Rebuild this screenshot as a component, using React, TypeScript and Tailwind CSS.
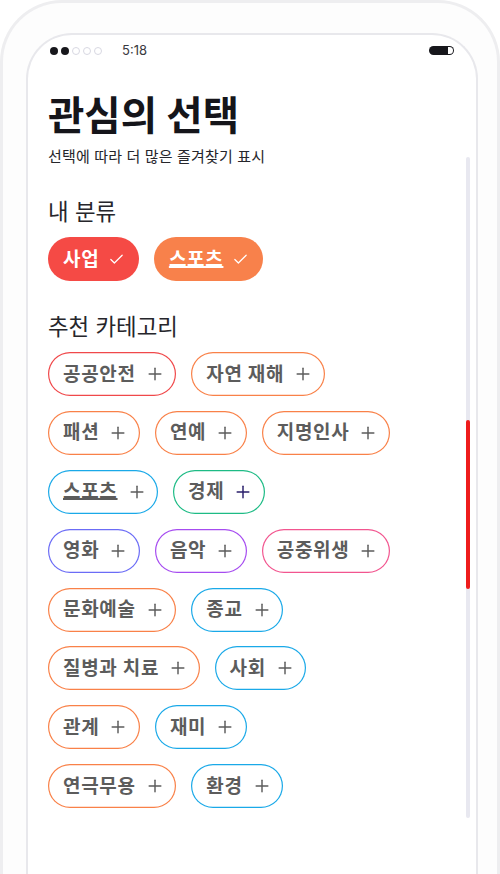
import { Plus, Check } from "lucide-react";

type Topic = { label: string; border: string; plusColor?: string; underline?: boolean };

const rows: Topic[][] = [
    [
        { label: "공공안전", border: "shadow-[inset_0_0_0_1.2px_#f0484a]" },
        { label: "자연 재해", border: "shadow-[inset_0_0_0_1.2px_#f98148]" },
    ],
    [
        { label: "패션", border: "shadow-[inset_0_0_0_1.2px_#f98148]" },
        { label: "연예", border: "shadow-[inset_0_0_0_1.2px_#f98148]" },
        { label: "지명인사", border: "shadow-[inset_0_0_0_1.2px_#f98148]" },
    ],
    [
        { label: "스포츠", border: "shadow-[inset_0_0_0_1.2px_#1aa9e8]", underline: true },
        { label: "경제", border: "shadow-[inset_0_0_0_1.2px_#1dbb85]", plusColor: "text-[#2a1f6b]" },
    ],
    [
        { label: "영화", border: "shadow-[inset_0_0_0_1.2px_#6b6cf6]" },
        { label: "음악", border: "shadow-[inset_0_0_0_1.2px_#a64cf0]" },
        { label: "공중위생", border: "shadow-[inset_0_0_0_1.2px_#f2558f]" },
    ],
    [
        { label: "문화예술", border: "shadow-[inset_0_0_0_1.2px_#f98148]" },
        { label: "종교", border: "shadow-[inset_0_0_0_1.2px_#1aa9e8]" },
    ],
    [
        { label: "질병과 치료", border: "shadow-[inset_0_0_0_1.2px_#f98148]" },
        { label: "사회", border: "shadow-[inset_0_0_0_1.2px_#1aa9e8]" },
    ],
    [
        { label: "관계", border: "shadow-[inset_0_0_0_1.2px_#f98148]" },
        { label: "재미", border: "shadow-[inset_0_0_0_1.2px_#1aa9e8]" },
    ],
    [
        { label: "연극무용", border: "shadow-[inset_0_0_0_1.2px_#f98148]" },
        { label: "환경", border: "shadow-[inset_0_0_0_1.2px_#1aa9e8]" },
    ],
];

const TopicChip = ({ topic }: { topic: Topic }) => (
    <div className={`flex h-[44px] items-center gap-[9px] rounded-full bg-white pl-[15px] pr-[11.5px] ${topic.border}`}>
        <span className={`text-[19px] leading-none font-bold tracking-[0.7px] text-[#5c5c5c] ${topic.underline ? "underline decoration-[1.5px] underline-offset-0" : ""}`}>
            {topic.label}
        </span>
        <Plus size={20} strokeWidth={1.75} className={topic.plusColor ?? "text-[#5c5c5c]"} />
    </div>
);

const SelectedChip = ({ label, bg, underline }: { label: string; bg: string; underline?: boolean }) => (
    <div className={`flex h-[44px] items-center gap-[9px] rounded-full pl-[15px] pr-[13.5px] ${bg}`}>
        <span className={`text-[19px] leading-none font-bold tracking-[0.7px] text-white ${underline ? "underline decoration-[1.5px] underline-offset-0" : ""}`}>{label}</span>
        <Check size={17} strokeWidth={1.75} className="text-white" />
    </div>
);

export default function App() {
    return (
        <div
            className="h-[874px] w-[500px] overflow-hidden bg-white"
            style={{ fontFamily: '"Inter", "Noto Sans CJK KR", sans-serif' }}
        >
            {/* Device frame */}
            <div className="h-[930px] w-[500px] rounded-t-[62px] border-x-[3px] border-t-[3px] border-[#eeeef0] bg-[#fdfdfd] pt-[30px] pl-[23px] pr-[19px]">
                {/* Screen */}
                <div className="relative h-[880px] rounded-t-[46px] border-x-2 border-t-2 border-[#e8e8ec] bg-white pl-[20px]">
                    {/* Status bar */}
                    <div className="flex h-[30px] items-center pr-[22px] pt-[1px] pl-[2px]">
                        <div className="flex items-center gap-[3px]">
                            <span className="h-[8px] w-[8px] rounded-full bg-[#17171c]" />
                            <span className="h-[8px] w-[8px] rounded-full bg-[#17171c]" />
                            <span className="h-[8px] w-[8px] rounded-full border border-[#d8d8e2]" />
                            <span className="h-[8px] w-[8px] rounded-full border border-[#d8d8e2]" />
                            <span className="h-[8px] w-[8px] rounded-full border border-[#d8d8e2]" />
                        </div>
                        <span className="ml-[20px] text-[13px] text-[#3a3a40]">5:18</span>
                        <div className="ml-auto flex h-[9px] w-[25px] justify-end rounded-full bg-[#17171c] p-[1px]">
                            <span className="h-[7px] w-[5px] rounded-r-full bg-white" />
                        </div>
                    </div>

                    <h1 className="mt-[27px] text-[39.5px] leading-[48px] font-bold text-[#15151a]">관심의 선택</h1>
                    <p className="mt-[7px] text-[15px] leading-[20px] tracking-[0.15px] text-[#26262b]">선택에 따라 더 많은 즐겨찾기 표시</p>

                    <h2 className="mt-[31px] text-[22.4px] leading-[28px] text-[#26262b]">내 분류</h2>
                    <div className="mt-[11px] flex gap-[15px]">
                        <SelectedChip label="사업" bg="bg-[#f54a45]" />
                        <SelectedChip label="스포츠" bg="bg-[#f8814b]" underline />
                    </div>

                    <h2 className="mt-[32px] text-[22.4px] leading-[28px] text-[#26262b]">추천 카테고리</h2>
                    <div className="mt-[11px] flex flex-col gap-[14.9px]">
                        {rows.map((row) => (
                            <div key={row[0].label} className="flex gap-[15px]">
                                {row.map((topic) => (
                                    <TopicChip key={topic.label} topic={topic} />
                                ))}
                            </div>
                        ))}
                    </div>

                    {/* Scrollbar */}
                    <div className="absolute top-[122px] left-[438px] h-[661px] w-[4px] rounded-full bg-[#e8e8f0]">
                        <div className="absolute top-[263px] h-[169px] w-[4px] rounded-full bg-[#ee1c1c]" />
                    </div>
                </div>
            </div>
        </div>
    );
}
